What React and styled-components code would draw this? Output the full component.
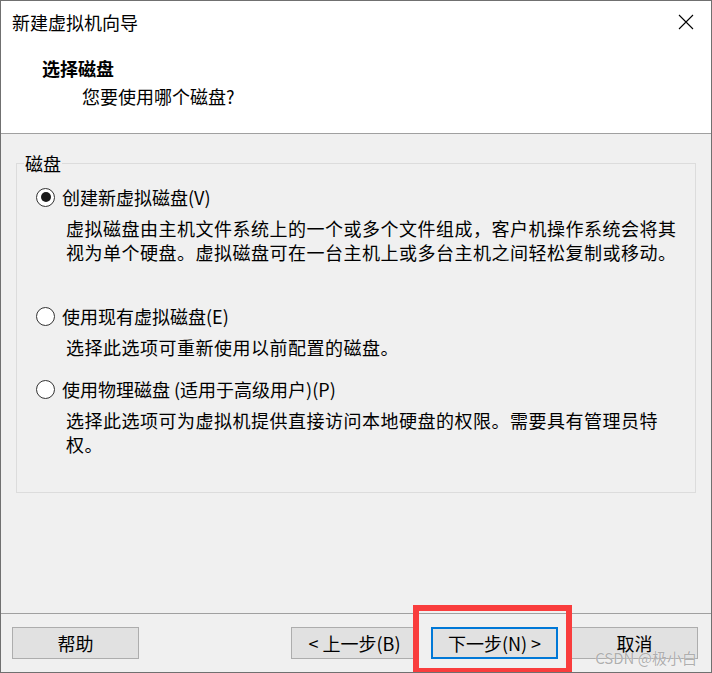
import React from 'react';
import styled, { createGlobalStyle } from 'styled-components';

const GlobalStyle = createGlobalStyle`
  html, body {
    margin: 0;
    padding: 0;
    background: #fff;
  }
  body {
    font-family: "Noto Sans CJK SC", "Noto Sans", sans-serif;
    color: #000;
  }
  * {
    box-sizing: border-box;
  }
`;

const Window = styled.div`
  width: 712px;
  height: 673px;
  border: 1px solid #707070;
  display: flex;
  flex-direction: column;
  background: #f0f0f0;
  overflow: hidden;
`;

const TitleBar = styled.div`
  height: 42px;
  flex: none;
  display: flex;
  align-items: center;
  justify-content: space-between;
  padding: 0 16px 0 11px;
  background: #fff;
  font-size: 18px;
  line-height: 24px;
`;

const CloseButton = styled.div`
  width: 18px;
  height: 18px;
  display: flex;
  align-items: center;
  justify-content: center;
`;

const Header = styled.div`
  height: 91px;
  flex: none;
  background: #fff;
  border-bottom: 1px solid #a0a0a0;
  padding: 13px 0 0 41px;
`;

const Heading = styled.div`
  font-size: 18px;
  line-height: 24px;
  font-weight: bold;
`;

const Subheading = styled.div`
  margin: 4px 0 0 40px;
  font-size: 18px;
  line-height: 24px;
`;

const Body = styled.div`
  flex: 1;
  padding: 0 15px;
`;

const GroupBox = styled.fieldset`
  margin: 17px 0 0;
  padding: 10px 0 36px 19px;
  border: 1px solid #dcdcdc;
  min-width: 0;
`;

const Legend = styled.legend`
  margin-left: -12px;
  padding: 0 1px;
  font-size: 18px;
  line-height: 24px;
`;

const Option = styled.div`
  margin-bottom: ${(p) => p.$space}px;
`;

const OptionLabel = styled.label`
  display: flex;
  align-items: center;
  gap: 7px;
  height: 24px;
  font-size: 18px;
  line-height: 24px;
`;

const Radio = styled.span`
  width: 19px;
  height: 19px;
  flex: none;
  border-radius: 50%;
  border: 1.5px solid #333;
  background: #fff;
  display: flex;
  align-items: center;
  justify-content: center;

  &::after {
    content: '';
    width: 10px;
    height: 10px;
    border-radius: 50%;
    background: ${(p) => (p.$checked ? '#1a1a1a' : 'transparent')};
  }
`;

const Description = styled.p`
  margin: 7px 0 0 30px;
  font-size: 18px;
  line-height: 24px;
  letter-spacing: 0.5px;
`;

const Footer = styled.div`
  position: relative;
  height: 59px;
  flex: none;
  border-top: 1px solid #a0a0a0;
  display: flex;
  justify-content: space-between;
  align-items: flex-start;
  padding: 13px 13px 0 11px;
`;

const ButtonGroup = styled.div`
  display: flex;
  gap: 13px;
`;

const Button = styled.button`
  width: 127px;
  height: 32px;
  padding: 0;
  background: #e1e1e1;
  border: ${(p) => (p.$focused ? '2px solid #0078d7' : '1px solid #adadad')};
  font-family: inherit;
  font-size: 18px;
  line-height: 24px;
  color: #000;
`;

const Highlight = styled.div`
  position: absolute;
  left: 412px;
  top: -9px;
  width: 159px;
  height: 69px;
  border: 6px solid #f93d3d;
  pointer-events: none;
`;

const Watermark = styled.div`
  position: absolute;
  right: 14px;
  bottom: 5px;
  font-size: 15px;
  line-height: 18px;
  color: rgba(140, 140, 140, 0.7);
  text-shadow: 0 0 1px #fff;
  pointer-events: none;
`;

const options = [
  {
    label: '创建新虚拟磁盘(V)',
    checked: true,
    lines: ['虚拟磁盘由主机文件系统上的一个或多个文件组成，客户机操作系统会将其', '视为单个硬盘。虚拟磁盘可在一台主机上或多台主机之间轻松复制或移动。'],
    space: 40,
  },
  {
    label: '使用现有虚拟磁盘(E)',
    lines: ['选择此选项可重新使用以前配置的磁盘。'],
    space: 18,
  },
  {
    label: '使用物理磁盘 (适用于高级用户)(P)',
    lines: ['选择此选项可为虚拟机提供直接访问本地硬盘的权限。需要具有管理员特', '权。'],
    space: 0,
  },
];

const App = () => {
  return (
    <>
      <GlobalStyle />
      <Window>
        <TitleBar>
          <span>新建虚拟机向导</span>
          <CloseButton>
            <svg width="16" height="16" viewBox="0 0 16 16">
              <path d="M1 1 L15 15 M15 1 L1 15" stroke="#000" strokeWidth="1.1" fill="none" />
            </svg>
          </CloseButton>
        </TitleBar>
        <Header>
          <Heading>选择磁盘</Heading>
          <Subheading>您要使用哪个磁盘?</Subheading>
        </Header>
        <Body>
          <GroupBox>
            <Legend>磁盘</Legend>
            {options.map((o) => (
              <Option key={o.label} $space={o.space}>
                <OptionLabel>
                  <Radio $checked={o.checked} />
                  {o.label}
                </OptionLabel>
                <Description>
                  {o.lines.map((line, i) => (
                    <React.Fragment key={i}>
                      {i > 0 && <br />}
                      {line}
                    </React.Fragment>
                  ))}
                </Description>
              </Option>
            ))}
          </GroupBox>
        </Body>
        <Footer>
          <Button>帮助</Button>
          <ButtonGroup>
            <Button>&lt; 上一步(B)</Button>
            <Button $focused>下一步(N) &gt;</Button>
            <Button>取消</Button>
          </ButtonGroup>
          <Highlight />
          <Watermark>CSDN @极小白</Watermark>
        </Footer>
      </Window>
    </>
  );
};

export default App;
